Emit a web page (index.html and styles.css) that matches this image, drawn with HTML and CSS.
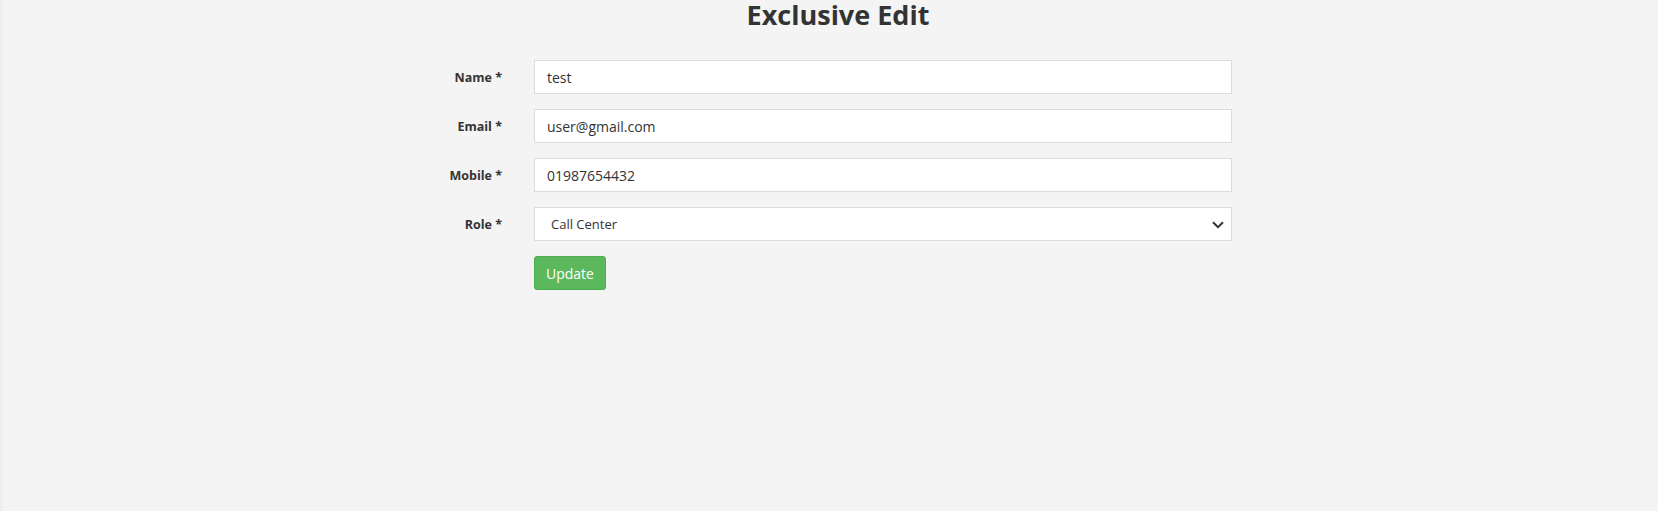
FILE: index.html
```html
<!DOCTYPE html>
<html lang="en">
<head>
<meta charset="utf-8">
<title>Exclusive Edit</title>
<link rel="stylesheet" href="styles.css">
</head>
<body>
<main class="page">
  <h1 class="title">Exclusive Edit</h1>
  <form class="form">
    <label class="label" for="name">Name *</label>
    <input class="field" id="name" type="text" value="test">

    <label class="label" for="email">Email *</label>
    <input class="field" id="email" type="text" value="user@gmail.com">

    <label class="label" for="mobile">Mobile *</label>
    <input class="field" id="mobile" type="text" value="01987654432">

    <label class="label" for="role">Role *</label>
    <div class="select-wrap">
      <select class="field select" id="role">
        <option selected>Call Center</option>
        <option>Admin</option>
      </select>
      <svg class="chevron" width="12" height="8" viewBox="0 0 12 8" aria-hidden="true">
        <path d="M1 1.2 L6 6.2 L11 1.2" fill="none" stroke="#333" stroke-width="2"/>
      </svg>
    </div>

    <span class="spacer"></span>
    <div class="actions">
      <button class="btn" type="button">Update</button>
    </div>
  </form>
</main>
</body>
</html>
```
FILE: styles.css
```css
html, body {
  margin: 0;
  padding: 0;
}
body {
  background: #f4f4f4;
  font-family: "Open Sans", "Noto Sans", sans-serif;
  color: #333;
  min-height: 511px;
  box-shadow: inset 5px 0 5px -3px rgba(0, 0, 0, 0.04);
}
.page {
  padding-left: 18px;
}
.title {
  margin: 0;
  font-size: 27px;
  line-height: 30px;
  font-weight: 700;
  text-align: center;
  color: #333;
}
.form {
  margin: 30px 0 0 384px;
  display: grid;
  grid-template-columns: 100px 698px;
  grid-auto-rows: 34px;
  column-gap: 32px;
  row-gap: 15px;
  align-items: center;
}
.label {
  text-align: right;
  font-size: 12.5px;
  font-weight: 700;
  color: #333;
}
.field {
  box-sizing: border-box;
  width: 100%;
  height: 34px;
  margin: 0;
  border: 1px solid #dcdcdc;
  border-radius: 0;
  background: #fff;
  padding: 0 12px;
  font-family: "Open Sans", "Noto Sans", sans-serif;
  font-size: 14px;
  color: #333;
  outline: none;
}
.select-wrap {
  position: relative;
  height: 34px;
}
.select {
  -webkit-appearance: none;
  appearance: none;
  padding-left: 16px;
  font-size: 13px;
}
.chevron {
  position: absolute;
  right: 8px;
  top: 14px;
  pointer-events: none;
}
.actions {
  display: flex;
  height: 34px;
}
.btn {
  height: 34px;
  padding: 0 11px;
  border: 1px solid #4cae4c;
  border-radius: 3px;
  background: #5cb85c;
  color: #fff;
  font-family: "Open Sans", "Noto Sans", sans-serif;
  font-size: 14px;
}
```
